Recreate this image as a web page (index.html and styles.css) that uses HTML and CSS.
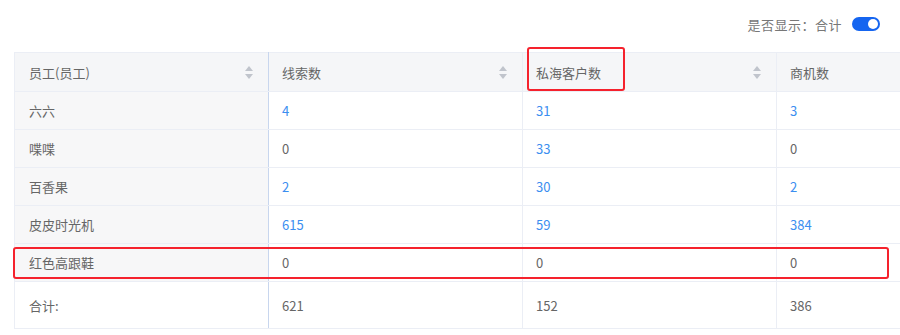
FILE: index.html
```html
<!DOCTYPE html>
<html lang="zh">
<head>
<meta charset="utf-8">
<link rel="stylesheet" href="styles.css">
</head>
<body>
<div class="page">
  <div class="toolbar">
    <span class="toolbar-label">是否显示：合计</span>
    <span class="switch"><span class="knob"></span></span>
  </div>
  <div class="table-wrap">
    <table class="grid">
      <colgroup>
        <col class="c1"><col class="c2"><col class="c3"><col class="c4">
      </colgroup>
      <thead>
        <tr>
          <th class="fixed"><div class="th-in"><span>员工(员工)</span><span class="sort"><i class="up"></i><i class="down"></i></span></div></th>
          <th><div class="th-in"><span>线索数</span><span class="sort"><i class="up"></i><i class="down"></i></span></div></th>
          <th><div class="th-in"><span>私海客户数</span><span class="sort"><i class="up"></i><i class="down"></i></span></div></th>
          <th><div class="th-in"><span>商机数</span></div></th>
        </tr>
      </thead>
      <tbody>
        <tr><td class="fixed">六六</td><td class="link">4</td><td class="link">31</td><td class="link">3</td></tr>
        <tr><td class="fixed">喋喋</td><td>0</td><td class="link">33</td><td>0</td></tr>
        <tr><td class="fixed">百香果</td><td class="link">2</td><td class="link">30</td><td class="link">2</td></tr>
        <tr><td class="fixed">皮皮时光机</td><td class="link">615</td><td class="link">59</td><td class="link">384</td></tr>
        <tr><td class="fixed">红色高跟鞋</td><td>0</td><td>0</td><td>0</td></tr>
        <tr class="total"><td class="fixed">合计:</td><td>621</td><td>152</td><td>386</td></tr>
      </tbody>
    </table>
  </div>
  <div class="mark mark-col"></div>
  <div class="mark mark-row"></div>
</div>
</body>
</html>
```

FILE: styles.css
```css
* { box-sizing: border-box; }
html, body { margin: 0; padding: 0; background: #fff; }
body {
  width: 900px;
  height: 335px;
  overflow: hidden;
  font-family: "Noto Sans CJK SC", "Microsoft YaHei", sans-serif;
  font-size: 13px;
  color: #666;
}
.page { position: relative; width: 900px; height: 335px; }
.toolbar {
  height: 52px;
  display: flex;
  align-items: center;
  justify-content: flex-end;
  padding-right: 20px;
  padding-bottom: 4px;
  gap: 10px;
}
.toolbar-label { color: #777; font-size: 13px; letter-spacing: 0.5px; }
.switch {
  width: 28px;
  height: 14px;
  border-radius: 7px;
  background: #1565f0;
  position: relative;
  display: inline-block;
}
.knob {
  position: absolute;
  right: 2px;
  top: 2px;
  width: 10px;
  height: 10px;
  border-radius: 50%;
  background: #fff;
}
.table-wrap {
  margin-left: 14px;
  width: 886px;
  overflow: hidden;
}
.grid {
  border-collapse: collapse;
  table-layout: fixed;
  width: 1000px;
}
.c1 { width: 254px; }
.c2 { width: 254px; }
.c3 { width: 254px; }
.c4 { width: 238px; }
.grid th, .grid td {
  border: 1px solid #ebeef5;
  text-align: left;
  padding: 0 13px;
  font-weight: normal;
  white-space: nowrap;
}
.grid th {
  height: 39px;
  background: #f5f6f8;
  color: #666;
}
.grid td { height: 38px; color: #666; }
.grid tr.total td { height: 47px; }
.grid .fixed {
  background: #f7f7f8;
  border-right: 1px solid #c8d6ee;
  padding-left: 14px;
}
.grid tr.total .fixed { background: #fff; }
.grid th.fixed { background: #f5f6f8; }
.grid td.link { color: #3b8ef0; }
.th-in {
  display: flex;
  align-items: center;
  justify-content: space-between;
}
.sort {
  display: flex;
  flex-direction: column;
  gap: 3px;
  margin-right: 2px;
}
.sort i {
  display: block;
  width: 0;
  height: 0;
  border-left: 4px solid transparent;
  border-right: 4px solid transparent;
}
.sort .up { border-bottom: 5px solid #c0c4cc; }
.sort .down { border-top: 5px solid #c0c4cc; }
.mark {
  position: absolute;
  border: 2px solid #f5222d;
  border-radius: 3px;
}
.mark-col { left: 527px; top: 47px; width: 98px; height: 44px; }
.mark-row { left: 13px; top: 247px; width: 876px; height: 32px; }
```
